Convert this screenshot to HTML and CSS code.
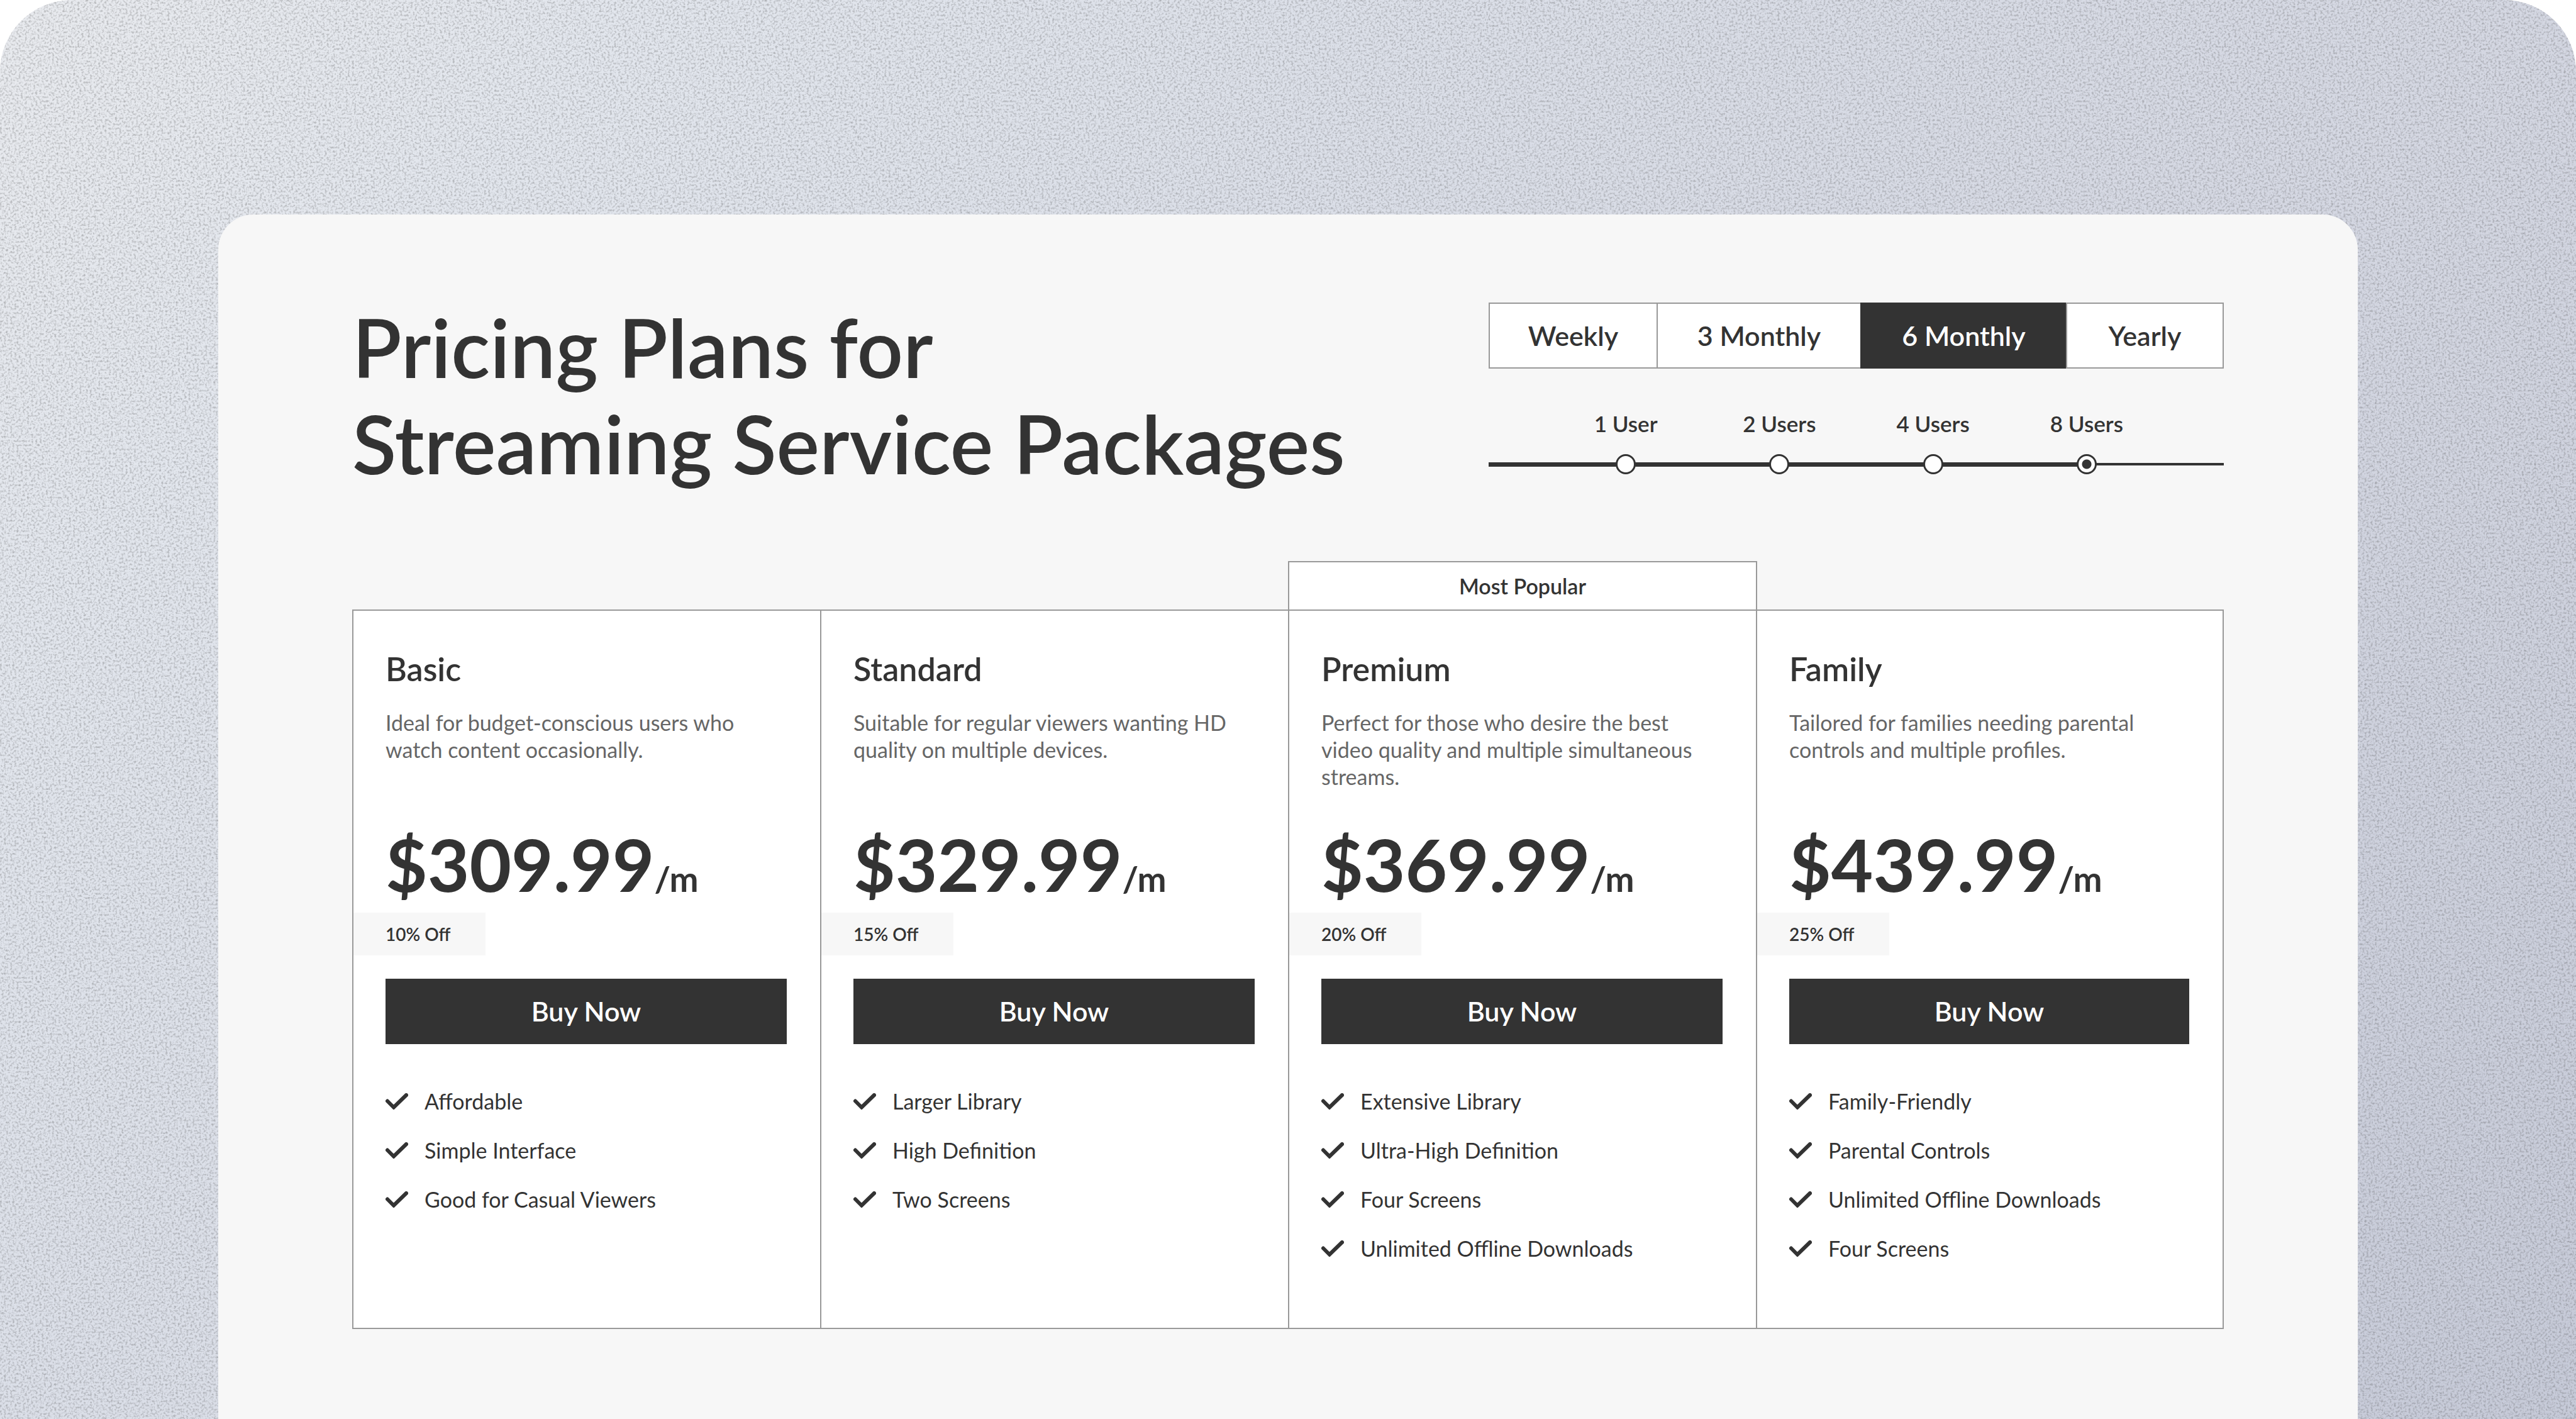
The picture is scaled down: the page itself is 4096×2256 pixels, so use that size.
FILE: index.html
```html
<!DOCTYPE html>
<html lang="en">
<head>
  <meta charset="utf-8">
  <meta name="viewport" content="width=device-width, initial-scale=1">
  <title>Pricing Plans for Streaming Service Packages</title>
  <link rel="stylesheet" href="styles.css">
</head>
<body>
  <svg class="sprite" aria-hidden="true">
    <symbol id="check" viewBox="0 0 36 26">
      <path d="M3 12.500L13 22.500L33 3" fill="none" stroke="currentColor" stroke-width="6" stroke-linecap="round" stroke-linejoin="miter"/>
    </symbol>
  </svg>

  <div class="backdrop">
    <svg class="grain" aria-hidden="true">
      <filter id="grain" x="0" y="0" width="100%" height="100%" color-interpolation-filters="sRGB">
        <feTurbulence type="fractalNoise" baseFrequency="0.300" numOctaves="2" seed="7"/>
        <feColorMatrix values="0 0 0 0 0.250  0 0 0 0 0.250  0 0 0 0 0.250  0 0 0 0.800 -0.360"/>
      </filter>
      <rect width="100%" height="100%" filter="url(#grain)"/>
    </svg>

    <main class="panel">
      <header class="header">
        <h1 class="headline">Pricing Plans for<br>Streaming Service Packages</h1>

        <div class="controls">
          <div class="periods" role="group" aria-label="Billing period">
            <button class="period" type="button" aria-pressed="false">Weekly</button>
            <button class="period" type="button" aria-pressed="false">3 Monthly</button>
            <button class="period" type="button" aria-pressed="true">6 Monthly</button>
            <button class="period" type="button" aria-pressed="false">Yearly</button>
          </div>

          <div class="users" role="radiogroup" aria-label="Number of users">
            <label class="stop">1 User<input class="dot" type="radio" name="users" value="1"></label>
            <label class="stop">2 Users<input class="dot" type="radio" name="users" value="2"></label>
            <label class="stop">4 Users<input class="dot" type="radio" name="users" value="4"></label>
            <label class="stop">8 Users<input class="dot" type="radio" name="users" value="8" checked></label>
          </div>
        </div>
      </header>

      <section class="plans" aria-label="Plans">
        <p class="popular">Most Popular</p>

        <article class="plan">
          <h2 class="plan-name">Basic</h2>
          <p class="plan-text">Ideal for budget-conscious users who watch content occasionally.</p>
          <p class="price">$309.99<span class="per">/m</span></p>
          <p class="discount">10% Off</p>
          <button class="buy" type="button">Buy Now</button>
          <ul class="features">
            <li class="feature"><svg class="check" aria-hidden="true"><use href="#check"/></svg>Affordable</li>
            <li class="feature"><svg class="check" aria-hidden="true"><use href="#check"/></svg>Simple Interface</li>
            <li class="feature"><svg class="check" aria-hidden="true"><use href="#check"/></svg>Good for Casual Viewers</li>
          </ul>
        </article>

        <article class="plan">
          <h2 class="plan-name">Standard</h2>
          <p class="plan-text">Suitable for regular viewers wanting HD quality on multiple devices.</p>
          <p class="price">$329.99<span class="per">/m</span></p>
          <p class="discount">15% Off</p>
          <button class="buy" type="button">Buy Now</button>
          <ul class="features">
            <li class="feature"><svg class="check" aria-hidden="true"><use href="#check"/></svg>Larger Library</li>
            <li class="feature"><svg class="check" aria-hidden="true"><use href="#check"/></svg>High Definition</li>
            <li class="feature"><svg class="check" aria-hidden="true"><use href="#check"/></svg>Two Screens</li>
          </ul>
        </article>

        <article class="plan">
          <h2 class="plan-name">Premium</h2>
          <p class="plan-text">Perfect for those who desire the best video quality and multiple simultaneous streams.</p>
          <p class="price">$369.99<span class="per">/m</span></p>
          <p class="discount">20% Off</p>
          <button class="buy" type="button">Buy Now</button>
          <ul class="features">
            <li class="feature"><svg class="check" aria-hidden="true"><use href="#check"/></svg>Extensive Library</li>
            <li class="feature"><svg class="check" aria-hidden="true"><use href="#check"/></svg>Ultra-High Definition</li>
            <li class="feature"><svg class="check" aria-hidden="true"><use href="#check"/></svg>Four Screens</li>
            <li class="feature"><svg class="check" aria-hidden="true"><use href="#check"/></svg>Unlimited Offline Downloads</li>
          </ul>
        </article>

        <article class="plan">
          <h2 class="plan-name">Family</h2>
          <p class="plan-text">Tailored for families needing parental controls and multiple profiles.</p>
          <p class="price">$439.99<span class="per">/m</span></p>
          <p class="discount">25% Off</p>
          <button class="buy" type="button">Buy Now</button>
          <ul class="features">
            <li class="feature"><svg class="check" aria-hidden="true"><use href="#check"/></svg>Family-Friendly</li>
            <li class="feature"><svg class="check" aria-hidden="true"><use href="#check"/></svg>Parental Controls</li>
            <li class="feature"><svg class="check" aria-hidden="true"><use href="#check"/></svg>Unlimited Offline Downloads</li>
            <li class="feature"><svg class="check" aria-hidden="true"><use href="#check"/></svg>Four Screens</li>
          </ul>
        </article>
      </section>
    </main>
  </div>
</body>
</html>
```
FILE: styles.css
```css
:root {
  --ink: #333;
  --muted: #666;
  --line: #999;
  --panel: #f7f7f7;
  --white: #fff;
}

* {
  box-sizing: border-box;
}

body,
h1,
h2,
p,
ul {
  margin: 0;
  padding: 0;
}

body {
  background: var(--white);
  color: var(--ink);
  font-family: "Lato", "Liberation Sans", sans-serif;
  font-size: 34px;
  line-height: 42px;
}

button {
  margin: 0;
  font-family: inherit;
  cursor: pointer;
}

.sprite {
  display: none;
}

/* Backdrop: soft gradient with a fine grain on top */
.backdrop {
  position: relative;
  display: flex;
  min-height: 100vh;
  padding: 341px 347px 0;
  overflow: hidden;
  border-radius: 114px 114px 0 0;
  background: linear-gradient(135deg, #e8eaee 0%, #e2e6ed 16%, #dbdfe8 36%, #d4d7e2 64%, #c6cad8 100%);
}

.grain {
  position: absolute;
  inset: 0;
  width: 100%;
  height: 100%;
}

.panel {
  position: relative;
  flex: 1;
  min-width: 0;
  padding: 134px 213px 143px;
  border-radius: 56px 56px 0 0;
  background: var(--panel);
}

/* Header */
.header {
  display: flex;
  justify-content: space-between;
  align-items: flex-start;
}

.headline {
  font-size: 129px;
  font-weight: 600;
  line-height: 153px;
}

.controls {
  display: flex;
  flex-direction: column;
  gap: 66px;
  width: 1169px;
  padding-top: 6px;
}

.periods {
  display: grid;
  grid-template-columns: 267fr 324fr 327fr 251fr;
}

.period {
  height: 105px;
  padding: 0;
  border: 2px solid var(--line);
  border-right-width: 0;
  background: var(--white);
  color: var(--ink);
  font-size: 43px;
  font-weight: 600;
  line-height: 52px;
}

.period:last-child {
  border-right-width: 2px;
}

.period[aria-pressed="true"] {
  border-color: var(--ink);
  background: var(--ink);
  color: var(--white);
}

/* The thick part of the track runs up to the chosen stop */
.users {
  display: flex;
  padding: 0 96px;
  background:
    linear-gradient(var(--ink), var(--ink)) left bottom 12px / 81% 7px no-repeat,
    linear-gradient(var(--ink), var(--ink)) left bottom 14px / 100% 4px no-repeat;
}

.stop {
  display: flex;
  flex: 1;
  flex-direction: column;
  align-items: center;
  gap: 27px;
  font-size: 35px;
  font-weight: 600;
  line-height: 43px;
}

.dot {
  appearance: none;
  width: 32px;
  height: 32px;
  margin: 0;
  border: 3px solid var(--ink);
  border-radius: 50%;
  background: var(--white);
}

.dot:checked {
  background: radial-gradient(circle, var(--ink) 7px, var(--white) 8px);
}

/* Plans */
.plans {
  display: grid;
  grid-template-columns: repeat(4, 1fr);
  margin-top: 111px;
}

.popular {
  grid-row: 1;
  grid-column: 3;
  margin: 0 -2px -2px 0;
  padding: 16px;
  border: 2px solid var(--line);
  background: var(--white);
  font-weight: 600;
  line-height: 43px;
  text-align: center;
}

.plan {
  display: flex;
  grid-row: 2;
  flex-direction: column;
  margin-right: -2px;
  padding: 60px 53px 105px 51px;
  border: 2px solid var(--line);
  background: var(--white);
}

.plan:last-child {
  margin-right: 0;
}

.plan-name {
  font-size: 52px;
  font-weight: 600;
  line-height: 64px;
}

.plan-text {
  min-height: 129px;
  margin-top: 32px;
  color: var(--muted);
  line-height: 43px;
}

.price {
  margin-top: 48px;
  font-size: 115px;
  font-weight: 700;
  line-height: 138px;
}

.per {
  font-size: 55px;
  line-height: 64px;
}

.discount {
  align-self: flex-start;
  margin: 9px 0 0 -51px;
  padding: 13px 56px 13px 51px;
  background: var(--panel);
  font-size: 28px;
  font-weight: 600;
}

.buy {
  height: 104px;
  margin-top: 37px;
  padding: 0;
  border: 0;
  background: var(--ink);
  color: var(--white);
  font-size: 43px;
  font-weight: 600;
  line-height: 52px;
}

.features {
  display: flex;
  flex-direction: column;
  gap: 36px;
  margin-top: 70px;
  list-style: none;
}

.feature {
  display: flex;
  gap: 26px;
  align-items: center;
}

.check {
  flex: none;
  width: 36px;
  height: 26px;
}
```
